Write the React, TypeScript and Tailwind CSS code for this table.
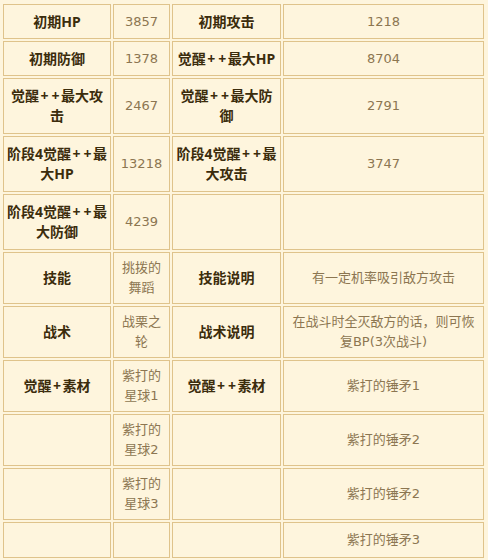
import React from "react";

type Cell = { t: string[]; b?: boolean };

const H = (...t: string[]): Cell => ({ t, b: true });
const V = (...t: string[]): Cell => ({ t });
const E: Cell = { t: [] };

const rows: Cell[][] = [
  [H("初期HP"), V("3857"), H("初期攻击"), V("1218")],
  [H("初期防御"), V("1378"), H("觉醒++最大HP"), V("8704")],
  [H("觉醒++最大攻", "击"), V("2467"), H("觉醒++最大防", "御"), V("2791")],
  [H("阶段4觉醒++最", "大HP"), V("13218"), H("阶段4觉醒++最", "大攻击"), V("3747")],
  [H("阶段4觉醒++最", "大防御"), V("4239"), E, E],
  [H("技能"), V("挑拨的", "舞蹈"), H("技能说明"), V("有一定机率吸引敌方攻击")],
  [H("战术"), V("战栗之", "轮"), H("战术说明"), V("在战斗时全灭敌方的话，则可恢", "复BP(3次战斗)")],
  [H("觉醒+素材"), V("紫打的", "星球1"), H("觉醒++素材"), V("紫打的锤矛1")],
  [E, V("紫打的", "星球2"), E, V("紫打的锤矛2")],
  [E, V("紫打的", "星球3"), E, V("紫打的锤矛2")],
  [E, E, E, V("紫打的锤矛3")],
];

function Line({ s }: { s: string }) {
  const parts = s.split("+");
  return (
    <span className="whitespace-nowrap">
      {parts.map((p, i) => (
        <React.Fragment key={i}>
          {i > 0 && <span className="inline-block w-[11px] text-center">+</span>}
          {p}
        </React.Fragment>
      ))}
    </span>
  );
}

export default function App() {
  return (
    <div className="w-[488px] h-[560px] bg-[#fef5dd] pt-[4px] pl-[3px]">
      <div className="grid grid-cols-[108px_57px_109px_201px] grid-rows-[35px_35px_56px_56px_56px_52px_52px_52px_52px_52px_36px] gap-[2px]">
        {rows.flatMap((r, i) =>
          r.map((c, j) => (
            <div
              key={`${i}-${j}`}
              className={
                c.b
                  ? "border border-[#dfc38b] flex flex-col items-center justify-center text-center text-[14px] leading-[20px] font-bold text-[#3b2c0c] [font-family:'Noto_Sans','Noto_Sans_CJK_SC',sans-serif]"
                  : "border border-[#dfc38b] flex flex-col items-center justify-center text-center text-[13px] leading-[20px] text-[#8c7651] [font-family:'DejaVu_Sans','Noto_Sans_CJK_SC',sans-serif]"
              }
            >
              {c.t.map((line, k) =>
                c.b ? (
                  <Line key={k} s={line} />
                ) : (
                  <span key={k} className="whitespace-nowrap">
                    {line}
                  </span>
                )
              )}
            </div>
          ))
        )}
      </div>
    </div>
  );
}
